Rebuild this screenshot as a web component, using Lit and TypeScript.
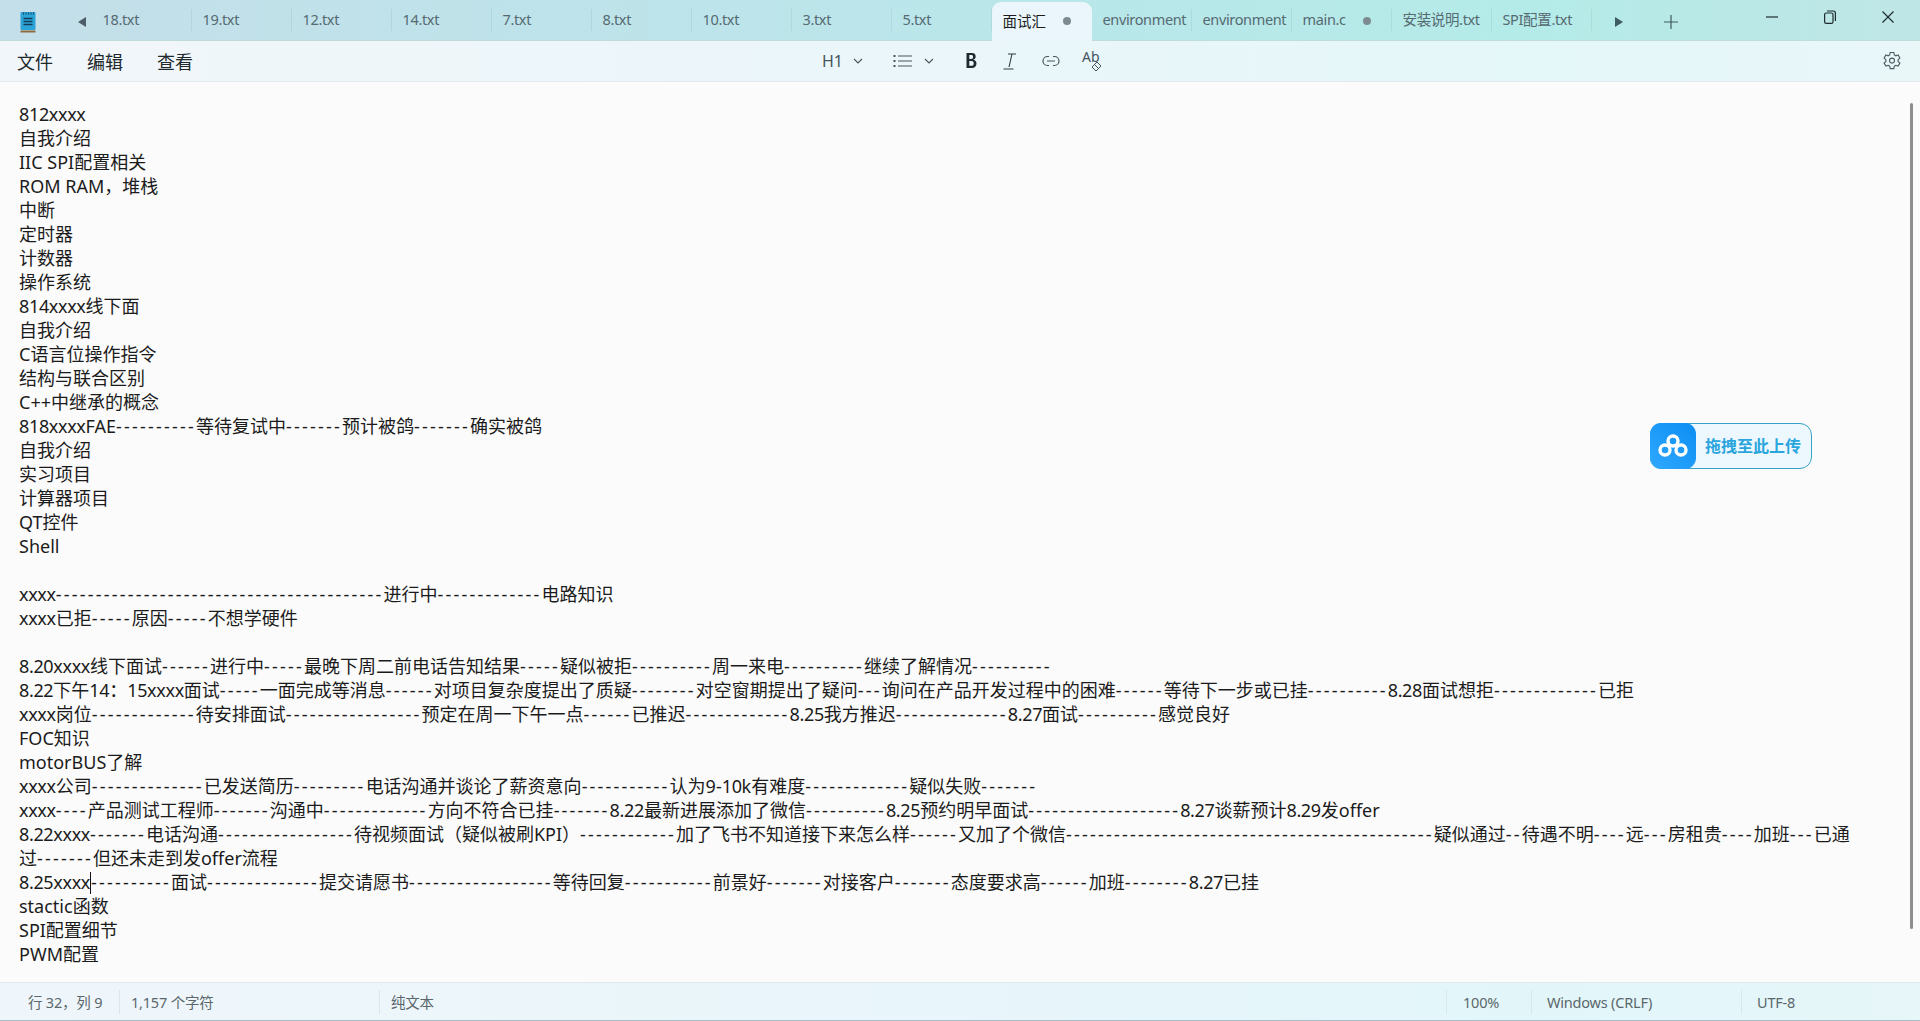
import { LitElement, css, html, svg } from 'lit'
import { customElement } from 'lit/decorators.js'

const TABS = ['18.txt', '19.txt', '12.txt', '14.txt', '7.txt', '8.txt', '10.txt', '3.txt', '5.txt']
const TABS_AFTER = [
  { name: 'environment', dirty: false },
  { name: 'environment', dirty: false },
  { name: 'main.c', dirty: true },
  { name: '安装说明.txt', dirty: false },
  { name: 'SPI配置.txt', dirty: false },
]

const d = (n: number) => '-'.repeat(n)

// text lines, already broken where the editor wraps
const LINES = [
  '812xxxx',
  '自我介绍',
  'IIC SPI配置相关',
  'ROM RAM，堆栈',
  '中断',
  '定时器',
  '计数器',
  '操作系统',
  '814xxxx线下面',
  '自我介绍',
  'C语言位操作指令',
  '结构与联合区别',
  'C++中继承的概念',
  `818xxxxFAE${d(10)}等待复试中${d(7)}预计被鸽${d(7)}确实被鸽`,
  '自我介绍',
  '实习项目',
  '计算器项目',
  'QT控件',
  'Shell',
  '',
  `xxxx${d(41)}进行中${d(13)}电路知识`,
  `xxxx已拒${d(5)}原因${d(5)}不想学硬件`,
  '',
  `8.20xxxx线下面试${d(6)}进行中${d(5)}最晚下周二前电话告知结果${d(5)}疑似被拒${d(10)}周一来电${d(10)}继续了解情况${d(10)}`,
  `8.22下午14：15xxxx面试${d(5)}一面完成等消息${d(6)}对项目复杂度提出了质疑${d(8)}对空窗期提出了疑问${d(3)}询问在产品开发过程中的困难${d(6)}等待下一步或已挂${d(10)}8.28面试想拒${d(13)}已拒`,
  `xxxx岗位${d(13)}待安排面试${d(17)}预定在周一下午一点${d(6)}已推迟${d(13)}8.25我方推迟${d(14)}8.27面试${d(10)}感觉良好`,
  'FOC知识',
  'motorBUS了解',
  `xxxx公司${d(14)}已发送简历${d(9)}电话沟通并谈论了薪资意向${d(11)}认为9-10k有难度${d(13)}疑似失败${d(7)}`,
  `xxxx${d(4)}产品测试工程师${d(7)}沟通中${d(13)}方向不符合已挂${d(7)}8.22最新进展添加了微信${d(10)}8.25预约明早面试${d(19)}8.27谈薪预计8.29发offer`,
  `8.22xxxx${d(7)}电话沟通${d(17)}待视频面试（疑似被刷KPI）${d(12)}加了飞书不知道接下来怎么样${d(6)}又加了个微信${d(46)}疑似通过${d(2)}待遇不明${d(4)}远${d(3)}房租贵${d(4)}加班${d(3)}已通`,
  `过${d(7)}但还未走到发offer流程`,
  `8.25xxxx|${d(10)}面试${d(14)}提交请愿书${d(18)}等待回复${d(11)}前景好${d(7)}对接客户${d(7)}态度要求高${d(6)}加班${d(8)}8.27已挂`,
  'stactic函数',
  'SPI配置细节',
  'PWM配置',
]

const icon = (w: number, h: number, body: unknown) =>
  html`<svg width=${w} height=${h} viewBox="0 0 ${w} ${h}" fill="none" stroke="currentColor">${body}</svg>`

const chevron = icon(10, 6, svg`<path d="M1 1l4 4 4-4" stroke-width="1.1"/>`)

@customElement('app-root')
export class AppRoot extends LitElement {
  private renderLine(line: string) {
    if (!line) return html`<div class="line">&nbsp;</div>`
    // dash runs, digit/x runs and the caret each get their own spacing
    const parts = line.split(/(-{2,}|\||[0-9.x]{2,})/)
    return html`<div class="line">${parts.map(p => {
      if (p === '|') return html`<span class="caret"></span>`
      if (/^-{2,}$/.test(p)) return html`<span class="dash">${p}</span>`
      if (/^[0-9.x]{2,}$/.test(p)) return html`<span class="narrow">${p}</span>`
      return p
    })}</div>`
  }

  private renderTab(name: string, dirty: boolean) {
    return html`<div class="tab"><span>${name}</span>${dirty ? html`<i class="dot"></i>` : ''}</div>`
  }

  render() {
    return html`
      <header class="tabbar">
        <div class="app-icon">
          <svg width="16" height="22" viewBox="0 0 16 22">
            <rect x="0.5" y="1" width="15" height="18" rx="1" fill="#2ba4d8"/>
            <path d="M3 2.4h1M5.5 2.4h1M8 2.4h1M10.5 2.4h1M13 2.4h1" stroke="#17425a" stroke-width="2"/>
            <path d="M3.5 7.5h9M3.5 10.5h9M3.5 13.5h9" stroke="#123c58" stroke-width="1.3"/>
            <rect x="0.5" y="19.5" width="15" height="2" fill="#8d6a3f"/>
          </svg>
        </div>
        <button class="arrow"><svg width="8" height="10" viewBox="0 0 8 10"><path d="M8 0v10L0 5z" fill="#4d5d68"/></svg></button>
        <div class="tabs">
          ${TABS.map(t => this.renderTab(t, false))}
          <div class="tab active"><span>面试汇</span><i class="dot"></i></div>
          ${TABS_AFTER.map(t => this.renderTab(t.name, t.dirty))}
        </div>
        <button class="arrow right"><svg width="8" height="10" viewBox="0 0 8 10"><path d="M0 0v10l8-5z" fill="#3f5c64"/></svg></button>
        <button class="plus">${icon(14, 14, svg`<path d="M7 0v14M0 7h14" stroke-width="1.2"/>`)}</button>
        <div class="win">
          <span>${icon(12, 2, svg`<path d="M0 1h12" stroke-width="1.2"/>`)}</span>
          <span>${icon(12, 14, svg`<rect x="0.6" y="3" width="8.4" height="10.4" rx="1.6" stroke-width="1.2"/><path d="M3 1h6.2A2.2 2.2 0 0 1 11.4 3.2V11" stroke-width="1.2"/>`)}</span>
          <span>${icon(12, 12, svg`<path d="M0.5 0.5l11 11M11.5 0.5l-11 11" stroke-width="1.2"/>`)}</span>
        </div>
      </header>

      <nav class="menubar">
        <div class="menus"><span>文件</span><span>编辑</span><span>查看</span></div>
        <div class="tools">
          <span class="h1">H1</span><span class="chev">${chevron}</span>
          <span class="list">${icon(19, 14, svg`<path d="M5 2h14M5 7h14M5 12h14" stroke-width="1.2"/><path d="M0.5 2h2M0.5 7h2M0.5 12h2" stroke-width="2"/>`)}</span><span class="chev">${chevron}</span>
          <span class="bold">${icon(13, 18, svg`<path d="M1.5 1h5.4c2.4 0 3.8 1.2 3.8 3.4 0 1.8-1.1 3-2.9 3.3v.1c2.2.2 3.7 1.5 3.7 3.6 0 2.7-1.8 4.6-4.5 4.6H1.5zM4.3 3.1v3.9h1.8c1.3 0 2-.7 2-2s-.7-1.9-2-1.9zM4.3 9.1v4.7h2.1c1.5 0 2.3-.9 2.3-2.4s-.9-2.3-2.4-2.3z" fill="#1f2a30" stroke="none" fill-rule="evenodd"/>`)}</span>
          <span class="ital">${icon(15, 17, svg`<path d="M5 1h8M9 1L6 14M0.5 16h10" stroke-width="1.1"/>`)}</span>
          <span class="link">${icon(18, 12, svg`<path d="M7 1.5H5.5a4.5 4.5 0 0 0 0 9H7M11 1.5h1.5a4.5 4.5 0 0 1 0 9H11M5 6h8" stroke-width="1.2"/>`)}</span>
          <span class="ab">
            <em>A</em><em>b</em>
            <svg width="11" height="11" viewBox="0 0 11 11" fill="none" stroke="currentColor"><path d="M6 1l4 4-5 5-4-4zM3.5 3.5l4 4" stroke-width="1"/></svg>
          </span>
        </div>
        <div class="gear">
          <svg width="20" height="20" viewBox="0 0 20 20" fill="none" stroke="currentColor" stroke-width="1.1">
            <path d="M8.2 1.5h3.6l.5 2.4 1.5.9 2.3-.8 1.8 3.1-1.8 1.6v1.7l1.8 1.6-1.8 3.1-2.3-.8-1.5.9-.5 2.4H8.2l-.5-2.4-1.5-.9-2.3.8-1.8-3.1 1.8-1.6V8.7L2.1 7.1l1.8-3.1 2.3.8 1.5-.9z"/>
            <circle cx="10" cy="9.6" r="2.5"/>
          </svg>
        </div>
      </nav>

      <main class="editor">
        ${LINES.map(l => this.renderLine(l))}
        <div class="upload">
          <div class="upload-icon">
            <svg width="32" height="24" viewBox="0 0 32 24" fill="none">
              <circle cx="16" cy="7" r="5" stroke="#fff" stroke-width="3.4"/>
              <circle cx="8" cy="16" r="5" stroke="#fff" stroke-width="3.4"/>
              <circle cx="24" cy="16" r="5" stroke="#fff" stroke-width="3.4"/>
            </svg>
          </div>
          <span>拖拽至此上传</span>
        </div>
        <div class="scroll"></div>
      </main>

      <footer class="status">
        <div class="cell pos">行 32，列 9</div>
        <div class="cell count">1,157 个字符</div>
        <div class="cell kind">纯文本</div>
        <div class="cell zoom">100%</div>
        <div class="cell eol">Windows (CRLF)</div>
        <div class="cell enc">UTF-8</div>
      </footer>
    `
  }

  static styles = css`
    :host {
      display: flex;
      flex-direction: column;
      height: 100vh;
      overflow: hidden;
      background: #fbfbfb;
      color: #1b1b1b;
      font-family: 'Noto Sans', 'Noto Sans CJK SC', sans-serif;
    }
    button {
      border: 0;
      padding: 0;
      background: none;
      display: flex;
      align-items: center;
      justify-content: center;
    }

    .tabbar {
      flex: none;
      height: 41px;
      display: flex;
      align-items: stretch;
      background: linear-gradient(90deg, #c4dfe9 0%, #bbe5ea 45%, #b4ebe8 80%, #bfe6e6 100%);
      border-bottom: 1px solid #c0dade;
      box-sizing: border-box;
    }
    .app-icon {
      width: 60px;
      padding: 11px 0 0 20px;
      box-sizing: border-box;
    }
    .arrow {
      width: 32px;
      padding-left: 12px;
      box-sizing: border-box;
      height: 44px;
    }
    .tabs {
      display: flex;
      align-items: stretch;
    }
    .tab {
      width: 100px;
      box-sizing: border-box;
      padding: 0 0 3px 10.5px;
      display: flex;
      align-items: center;
      font-size: 14.5px;
      letter-spacing: -0.35px;
      color: #566a72;
      white-space: nowrap;
      overflow: hidden;
      position: relative;
    }
    .tab::after {
      content: '';
      position: absolute;
      right: 0;
      top: 9px;
      bottom: 9px;
      width: 1px;
      background: rgba(60, 90, 100, 0.09);
    }
    .tab.active {
      margin-top: 2px;
      margin-bottom: -1px;
      height: 40px;
      background: #eaf6fb;
      border-radius: 9px 9px 0 0;
      color: #1b1b1b;
      letter-spacing: 0;
    }
    .tab.active::after {
      display: none;
    }
    .dot {
      width: 8px;
      height: 8px;
      border-radius: 50%;
      background: #7d8b90;
      position: absolute;
      left: 71px;
      top: 17px;
    }
    .tab.active .dot {
      top: 15px;
    }
    .arrow.right {
      width: 53px;
      padding: 0;
    }
    .plus {
      width: 52px;
      color: #3e5a60;
      padding-top: 3px;
    }
    .win {
      margin-left: auto;
      display: flex;
      align-items: center;
      padding: 0 26px 6px 0;
      gap: 46px;
      color: #1f2c30;
    }
    .win span {
      display: flex;
      width: 12px;
    }

    .menubar {
      flex: none;
      height: 41px;
      box-sizing: border-box;
      display: flex;
      align-items: center;
      position: relative;
      background: linear-gradient(90deg, #f1f6fa 0%, #eaf6fa 50%, #e4f7f9 80%, #e9f7f9 100%);
      border-bottom: 1px solid #e4e9ec;
    }
    .menus {
      display: flex;
      gap: 34px;
      padding-left: 17px;
      font-size: 18px;
      color: #20282c;
    }
    .tools {
      position: absolute;
      left: 822px;
      top: 0;
      bottom: 0;
      display: flex;
      align-items: center;
      color: #46555c;
    }
    .tools > span {
      display: flex;
      align-items: center;
    }
    .h1 {
      font-size: 16px;
      width: 31px;
    }
    .chev {
      width: 10px;
    }
    .list {
      margin-left: 30px;
      width: 31px;
    }
    .bold {
      margin-left: 31px;
      width: 38px;
    }
    .ital {
      width: 39px;
      color: #2e3a40;
    }
    .link {
      width: 40px;
    }
    .ab {
      position: relative;
      width: 20px;
      height: 22px;
      font-size: 14px;
    }
    .ab em {
      font-style: normal;
      line-height: 14px;
      margin-top: -8px;
    }
    .ab svg {
      position: absolute;
      right: 0;
      bottom: 0;
    }
    .gear {
      margin-left: auto;
      padding-right: 18px;
      display: flex;
      color: #4a5a60;
    }

    .editor {
      flex: 1;
      min-height: 0;
      position: relative;
      padding: 20px 0 0 19px;
      font-size: 18px;
      line-height: 24px;
      overflow: hidden;
    }
    .line {
      height: 24px;
      white-space: pre;
    }
    .dash {
      letter-spacing: 2.2px;
    }
    .narrow {
      letter-spacing: -0.35px;
    }
    .caret {
      display: inline-block;
      width: 1px;
      height: 22px;
      background: #111;
      vertical-align: -5px;
    }
    .upload {
      position: absolute;
      left: 1650px;
      top: 341px;
      width: 162px;
      height: 46px;
      box-sizing: border-box;
      display: flex;
      align-items: center;
      gap: 9px;
      background: #edf8fe;
      border: 1px solid #35a3c8;
      border-radius: 12px;
      font-size: 16px;
      font-weight: 700;
      color: #2aa5dd;
    }
    .upload-icon {
      width: 46px;
      height: 46px;
      margin: -1px 0 -1px -1px;
      border-radius: 11px;
      background: linear-gradient(45deg, #2fa9ff, #0c8df3);
      display: flex;
      align-items: center;
      justify-content: center;
    }
    .scroll {
      position: absolute;
      left: 1910px;
      top: 21px;
      width: 3px;
      height: 826px;
      border-radius: 2px;
      background: #8e8e8e;
    }

    .status {
      flex: none;
      height: 39px;
      box-sizing: border-box;
      display: flex;
      align-items: center;
      background: linear-gradient(90deg, #eff6fb 0%, #e8f5fa 50%, #e2f6f9 80%, #e6f6f9 100%);
      border-top: 1px solid #dfe9ee;
      border-bottom: 1px solid #a8bcc5;
      font-size: 14.5px;
      color: #5b676b;
      letter-spacing: -0.2px;
    }
    .cell {
      box-sizing: border-box;
      flex: none;
      display: flex;
      align-items: center;
      height: 24px;
      padding-left: 11px;
      border-right: 1px solid #dbe6ea;
    }
    .pos {
      width: 120px;
      padding-left: 28px;
    }
    .count {
      width: 260px;
    }
    .kind {
      flex: 1;
    }
    .zoom {
      width: 85px;
      padding-left: 16px;
    }
    .eol {
      width: 210px;
      padding-left: 15px;
    }
    .enc {
      width: 178px;
      padding-left: 15px;
      border-right: 0;
    }
  `
}
